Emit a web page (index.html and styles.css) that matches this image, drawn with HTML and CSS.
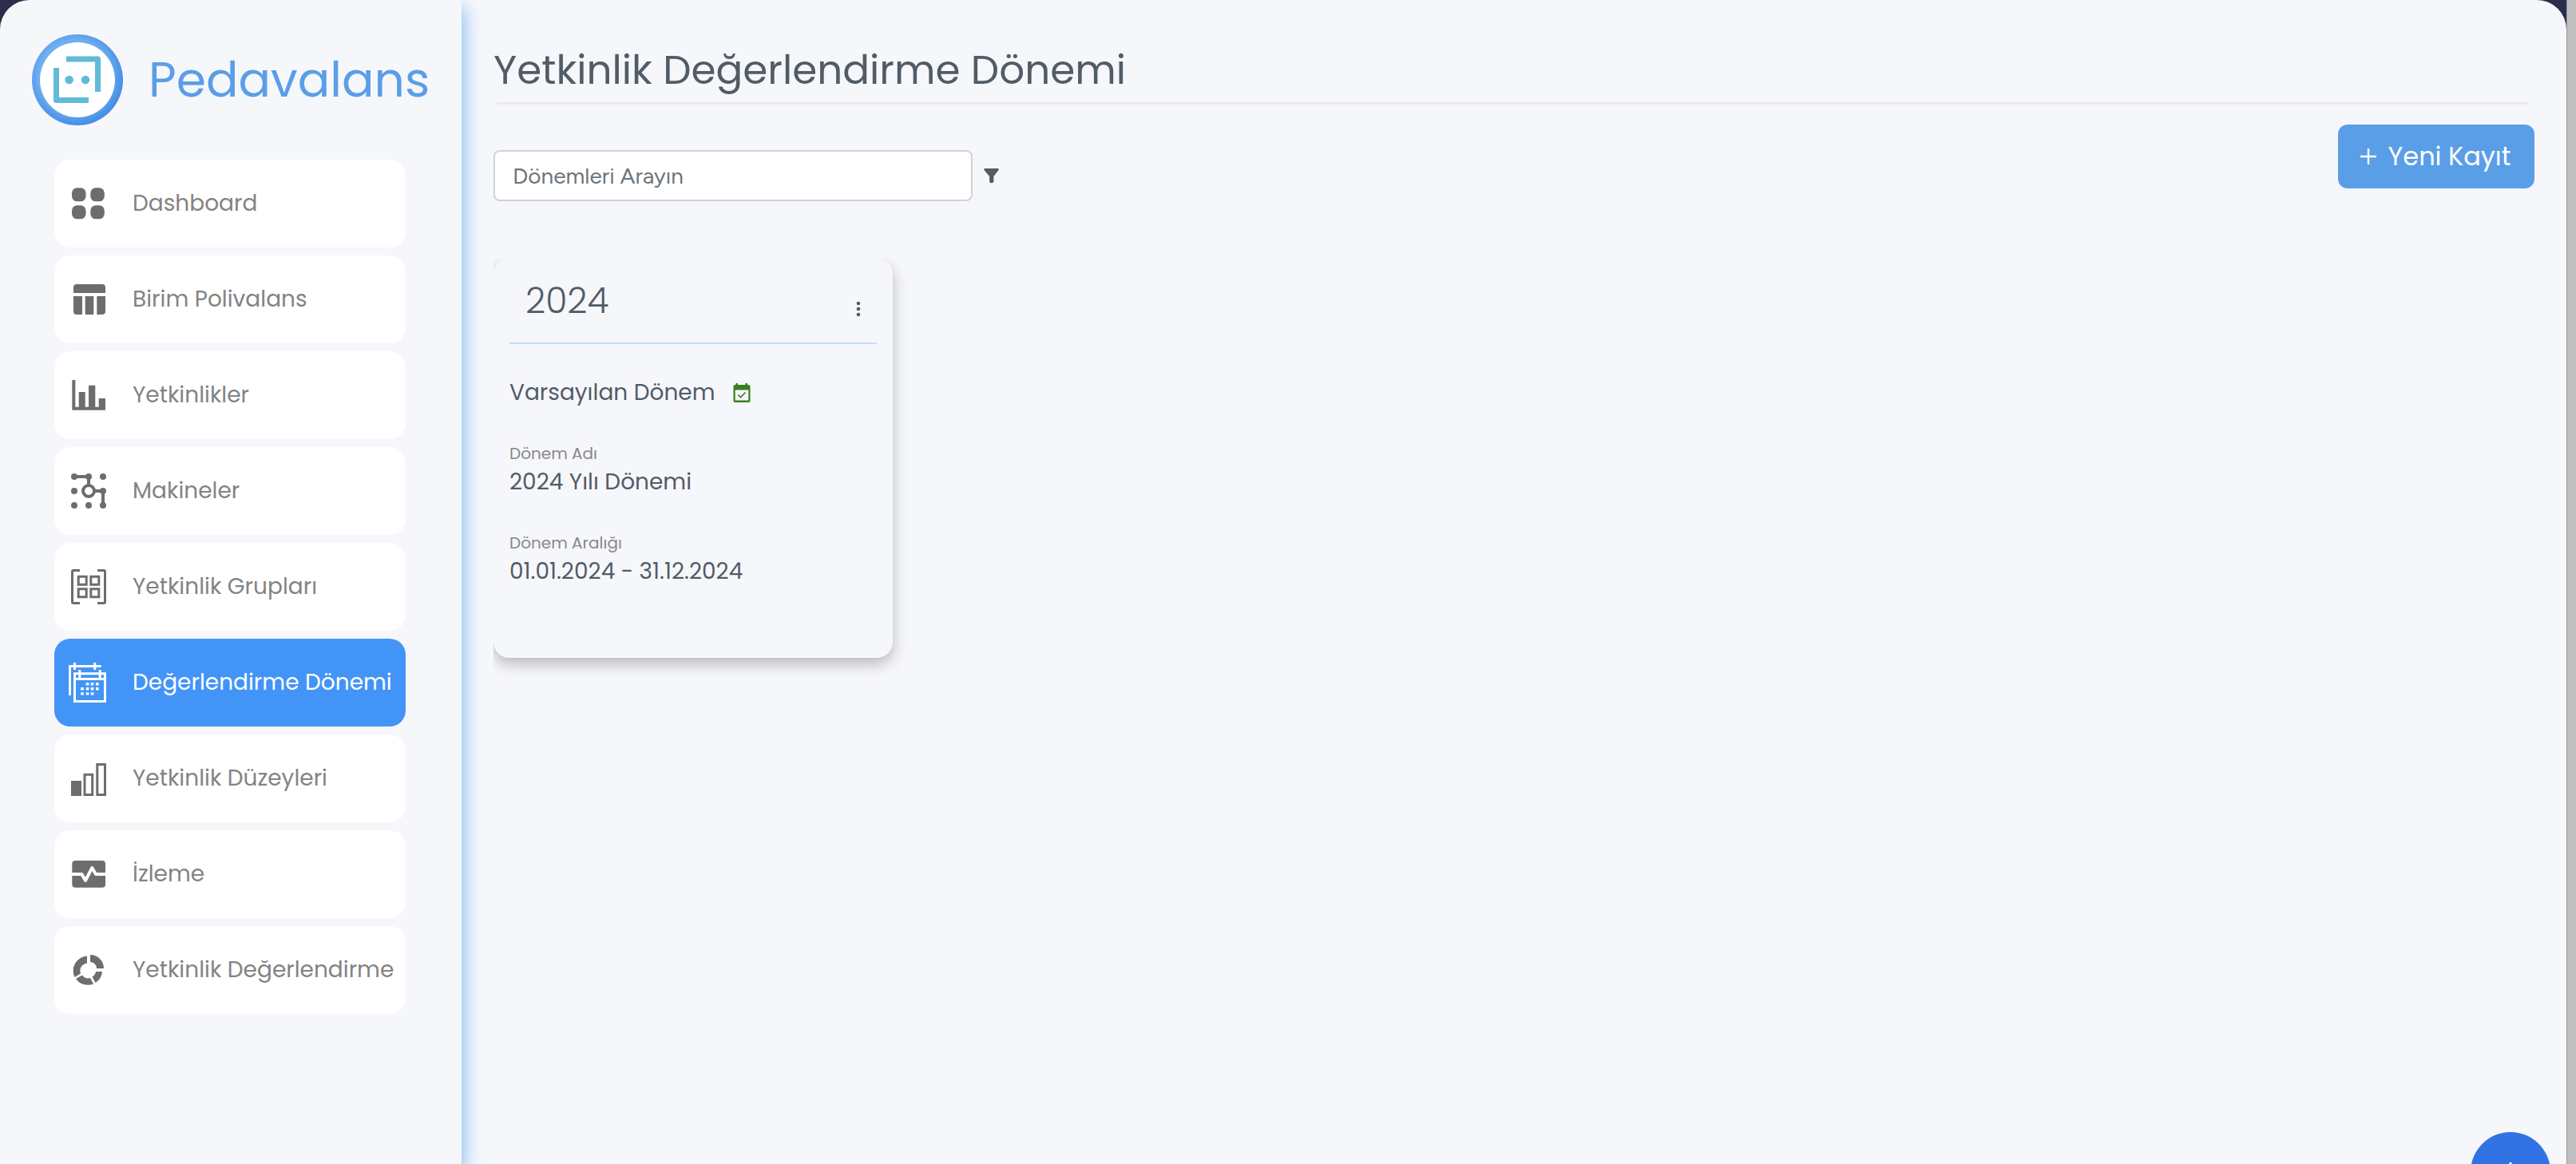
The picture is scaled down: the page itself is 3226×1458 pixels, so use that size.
FILE: index.html
```html
<!DOCTYPE html>
<html lang="tr">
<head>
<meta charset="utf-8">
<title>Pedavalans</title>
<link rel="stylesheet" href="styles.css">
</head>
<body>
<div class="app">
  <aside class="sidebar">
    <a class="brand" href="#">
      <svg class="brand-logo" viewBox="0 0 114 114" aria-hidden="true">
        <defs><radialGradient id="ring" cx="0.46" cy="0.45" r="0.56"><stop offset="0.68" stop-color="#70aff0"/><stop offset="1" stop-color="#418ce5"/></radialGradient></defs>
        <circle cx="57" cy="57" r="57" fill="url(#ring)"/>
        <circle cx="57" cy="57" r="47" fill="#fff"/>
        <g fill="none" stroke="#60bbd8" stroke-width="7" stroke-linejoin="round">
          <path d="M43 31H82.500V72M30.500 42V82.500H71"/>
        </g>
        <circle cx="46.600" cy="57" r="5.300" fill="#60bbd8"/><circle cx="67" cy="57" r="5.300" fill="#60bbd8"/>
      </svg>
      <span>Pedavalans</span>
    </a>
    <nav class="menu">
      <a class="menu-item" href="#">
        <svg class="menu-icon" viewBox="0 0 48 48"><rect x="3" y="4.300" width="17.500" height="17" rx="6.500"/><rect x="26.300" y="4.300" width="17.500" height="17" rx="6.500"/><rect x="3" y="26.300" width="17.500" height="17" rx="6.500"/><rect x="26.300" y="26.300" width="17.500" height="17" rx="6.500"/></svg>
        <span>Dashboard</span></a>
      <a class="menu-item" href="#">
        <svg class="menu-icon" viewBox="0 0 48 48"><path d="M9 5H41a4 4 0 0 1 4 4V16H5V9a4 4 0 0 1 4-4ZM5 20H16V43H9a4 4 0 0 1-4-4ZM19.700 20H30.300V43H19.700ZM34.300 20H45V39a4 4 0 0 1-4 4H34.300Z"/></svg>
        <span>Birim Polivalans</span></a>
      <a class="menu-item" href="#">
        <svg class="menu-icon" viewBox="0 0 48 48"><path d="M3.300 5H7.300V38.700H11.700V20H19.700V38.700H24V11.700H32.300V38.700H36.700V28H45V42.700H3.300Z"/></svg>
        <span>Yetkinlikler</span></a>
      <a class="menu-item" href="#">
        <svg class="menu-icon" viewBox="0 0 48 48"><g fill="none" stroke="currentColor" stroke-width="4"><path d="M6 6H24V17M31 24H42V42"/><circle cx="24" cy="24" r="7"/></g><circle cx="6" cy="6" r="4"/><circle cx="24" cy="6" r="4"/><circle cx="42" cy="6" r="4"/><circle cx="6" cy="24" r="4"/><circle cx="42" cy="24" r="4"/><circle cx="6" cy="42" r="4"/><circle cx="24" cy="42" r="4"/><circle cx="42" cy="42" r="4"/></svg>
        <span>Makineler</span></a>
      <a class="menu-item" href="#">
        <svg class="menu-icon" viewBox="0 0 48 48"><g fill="none" stroke="currentColor" stroke-width="3"><path d="M13 3.500H5a1.500 1.500 0 0 0-1.500 1.500V43a1.500 1.500 0 0 0 1.500 1.500H13M35 3.500H43a1.500 1.500 0 0 1 1.500 1.500V43a1.500 1.500 0 0 1-1.500 1.500H35"/><path d="M11.200 11.200h10v10h-10ZM26.800 11.200h10v10h-10ZM11.200 26.800h10v10h-10ZM26.800 26.800h10v10h-10Z"/></g></svg>
        <span>Yetkinlik Grupları</span></a>
      <a class="menu-item active" href="#" aria-current="page">
        <svg class="menu-icon" viewBox="0 0 48 48"><g fill="none" stroke="currentColor" stroke-width="3"><path d="M.500 40V3.500H39.700M6.500-1V8M31.800-1V8"/><path d="M6.500 12.800H44.500V47.500H6.500ZM6.500 19.500H44.500M12.800 8V18M38.200 8V18"/></g><path d="M20.700 24h3.600v3.400h-3.600ZM26.700 24h3.600v3.400h-3.600ZM33 24h3.600v3.400h-3.600ZM14.200 30h3.600v3.400h-3.600ZM20.700 30h3.600v3.400h-3.600ZM26.700 30h3.600v3.400h-3.600ZM33 30h3.600v3.400h-3.600ZM14.200 36.200h3.600v3.400h-3.600ZM20.700 36.200h3.600v3.400h-3.600ZM26.700 36.200h3.600v3.400h-3.600Z"/></svg>
        <span>Değerlendirme Dönemi</span></a>
      <a class="menu-item" href="#">
        <svg class="menu-icon" viewBox="0 0 48 48"><path d="M2 27H15V46H2Z"/><path fill="none" stroke="currentColor" stroke-width="3" d="M19 19.200H28.700V44.500H19ZM34.800 6.500H44.500V44.500H34.800Z"/></svg>
        <span>Yetkinlik Düzeyleri</span></a>
      <a class="menu-item" href="#">
        <svg class="menu-icon" viewBox="0 0 48 48"><rect x="3.300" y="7" width="41.700" height="33.700" rx="4"/><path d="M3 24H15.500L20 32L28.300 16L33 24H45.500" fill="none" stroke="#fff" stroke-width="4" stroke-linejoin="round"/></svg>
        <span>İzleme</span></a>
      <a class="menu-item" href="#">
        <svg class="menu-icon" viewBox="0 0 48 48"><path d="M26 5A17 17 0 0 1 43 22H34A8 8 0 0 0 26 14ZM22 6.500V15.500A9.500 9.500 0 0 0 14 28.500L6.500 33A18.500 18.500 0 0 1 22 6.500ZM8 35L16 30.500A9.500 9.500 0 0 0 26 34L30 41.500A18.500 18.500 0 0 1 8 35ZM28.500 32.500A9 9 0 0 0 33 26H41A18 18 0 0 1 32.500 40Z"/></svg>
        <span>Yetkinlik Değerlendirme</span></a>
    </nav>
  </aside>

  <main class="content">
    <h1 class="page-title">Yetkinlik Değerlendirme Dönemi</h1>
    <div class="toolbar">
      <form class="search">
        <input class="search-input" type="text" placeholder="Dönemleri Arayın" aria-label="Dönemleri Arayın">
        <button class="icon-button" type="button" aria-label="Filtrele">
          <svg class="filter-icon" viewBox="0 0 20 20"><path d="M1 0H19Q20 0 19.600 2L13 10.500V18Q10 20.500 7.500 18V10.500L.500 2Q0 0 1 0Z"/></svg>
        </button>
      </form>
      <button class="new-button" type="button">
        <svg class="plus-icon" viewBox="0 0 20 20"><path d="M10 0V20M0 10H20" stroke="currentColor" stroke-width="2.400"/></svg>
        <span>Yeni Kayıt</span>
      </button>
    </div>
    <section class="cards">
      <article class="card">
        <header class="card-head">
          <h2>2024</h2>
          <button class="icon-button" type="button" aria-label="Menü">
            <svg class="dots-icon" viewBox="0 0 6 20"><circle cx="3" cy="3" r="2.300"/><circle cx="3" cy="10" r="2.300"/><circle cx="3" cy="17" r="2.300"/></svg>
          </button>
        </header>
        <p class="default-row"><span>Varsayılan Dönem</span>
          <svg class="check-icon" viewBox="0 0 22 24"><path fill-rule="evenodd" d="M3.500 0H6V2H15.500V0H18V2H19.500A2 2 0 0 1 21.500 4V22A2 2 0 0 1 19.500 24H2.500A2 2 0 0 1 .500 22V4A2 2 0 0 1 2.500 2H3.500ZM2.700 8.500V21.500H19.300V8.500Z"/><path d="M6.500 14.500L9.500 17.500L15.500 11.500" fill="none" stroke="currentColor" stroke-width="1.600"/></svg>
        </p>
        <dl class="fields">
          <div><dt>Dönem Adı</dt><dd>2024 Yılı Dönemi</dd></div>
          <div><dt>Dönem Aralığı</dt><dd>01.01.2024 - 31.12.2024</dd></div>
        </dl>
      </article>
    </section>
  </main>
  <button class="fab" type="button" aria-label="Ekle"><svg class="fab-icon" viewBox="0 0 24 24"><path d="M12 0V24M0 12H24" stroke="currentColor" stroke-width="3"/></svg></button>
</div>
</body>
</html>
```
FILE: styles.css
```css
* { box-sizing: border-box; }
body {
  margin: 0;
  padding-right: 12px;
  background: linear-gradient(to left, #c1bfbf 11px, #9a9999 11px, #9a9999 12px, #2b2f4a 12px);
  font-family: Poppins, Inter, sans-serif;
  color: #525c66;
}
h1, h2, p, dl, dd { margin: 0; font-weight: 400; }
button { font: inherit; border: 0; cursor: pointer; }
svg { display: block; fill: currentColor; flex: none; overflow: visible; }

.app {
  display: flex;
  min-height: 100vh;
  background: #f6f7fb;
  border-radius: 37px 37px 0 0;
}

.sidebar {
  flex: none;
  width: 578px;
  box-shadow: 4px 10px 20px #8fc0f2;
  clip-path: inset(0 -40px 0 0);
}
.brand {
  display: flex;
  align-items: center;
  gap: 32px;
  height: 200px;
  padding-left: 40px;
  color: #5a9ee7;
  font-size: 60px;
  text-decoration: none;
}
.brand-logo { width: 114px; height: 114px; }
.menu {
  display: flex;
  flex-direction: column;
  gap: 10px;
  padding: 0 70px 0 68px;
}
.menu-item {
  display: flex;
  align-items: center;
  gap: 31px;
  height: 110px;
  padding-left: 19px;
  border-radius: 20px;
  background: #fff;
  color: #838383;
  font-size: 28px;
  white-space: nowrap;
  text-decoration: none;
}
.menu-icon { width: 48px; height: 48px; color: #6d6d6d; }
.menu-item.active, .active .menu-icon { color: #fff; }
.menu-item.active { background: #4394f7; }

.content { flex: 1; padding: 48px 40px 0; }
.page-title {
  margin-right: 4px;
  font-size: 50px;
  line-height: 80px;
  height: 80px;
  box-shadow: 0 6px 4px -4px #e2e3e8;
}
.toolbar {
  display: flex;
  justify-content: space-between;
  align-items: flex-start;
  padding-top: 28px;
}
.search {
  display: flex;
  align-items: center;
  gap: 14px;
  padding-top: 32px;
}
.search-input {
  width: 600px;
  height: 64px;
  padding: 0 22px;
  border: 2px solid #ced4da;
  border-radius: 8px;
  background: #fff;
  font: 28px Figtree, Lato, sans-serif;
}
.search-input::placeholder { color: #6c757d; opacity: 1; }
.icon-button { padding: 0; background: none; color: #525c66; }
.filter-icon { width: 19px; height: 19px; }
.new-button {
  display: flex;
  align-items: center;
  justify-content: center;
  gap: 15px;
  width: 246px;
  height: 80px;
  padding: 0 8px 0 6px;
  border-radius: 12px;
  background: #5a9ee7;
  color: #fff;
  font-size: 32px;
}
.plus-icon { width: 20px; height: 20px; }

.cards { margin-top: 72px; padding-bottom: 40px; overflow: hidden; }
.card {
  width: 500px;
  height: 500px;
  padding: 0 20px;
  border-radius: 20px;
  box-shadow: 0 8px 18px #b9bac0;
}
.card-head {
  display: flex;
  align-items: center;
  justify-content: space-between;
  height: 107px;
  padding: 0 20px;
  border-bottom: 2px solid #c5dcf5;
}
.card-head h2 { font-size: 44px; font-weight: 300; }
.card-head .icon-button { padding-top: 20px; }
.dots-icon { width: 6px; height: 20px; }
.default-row {
  display: flex;
  align-items: center;
  gap: 22px;
  margin-top: 41px;
  font-size: 28px;
  line-height: 40px;
}
.check-icon { width: 22px; height: 24px; color: #37801f; }
.fields { display: grid; gap: 40px; margin-top: 40px; }
.fields dt { font-size: 20px; line-height: 32px; color: #888; }
.fields dd { font-size: 28px; line-height: 40px; }

.fab {
  position: fixed;
  right: 32px;
  bottom: -60px;
  display: flex;
  justify-content: center;
  width: 100px;
  height: 100px;
  padding: 38px 0 0;
  border-radius: 50%;
  background: #3172e4;
  color: #fff;
}
.fab-icon { width: 24px; height: 24px; }
```
